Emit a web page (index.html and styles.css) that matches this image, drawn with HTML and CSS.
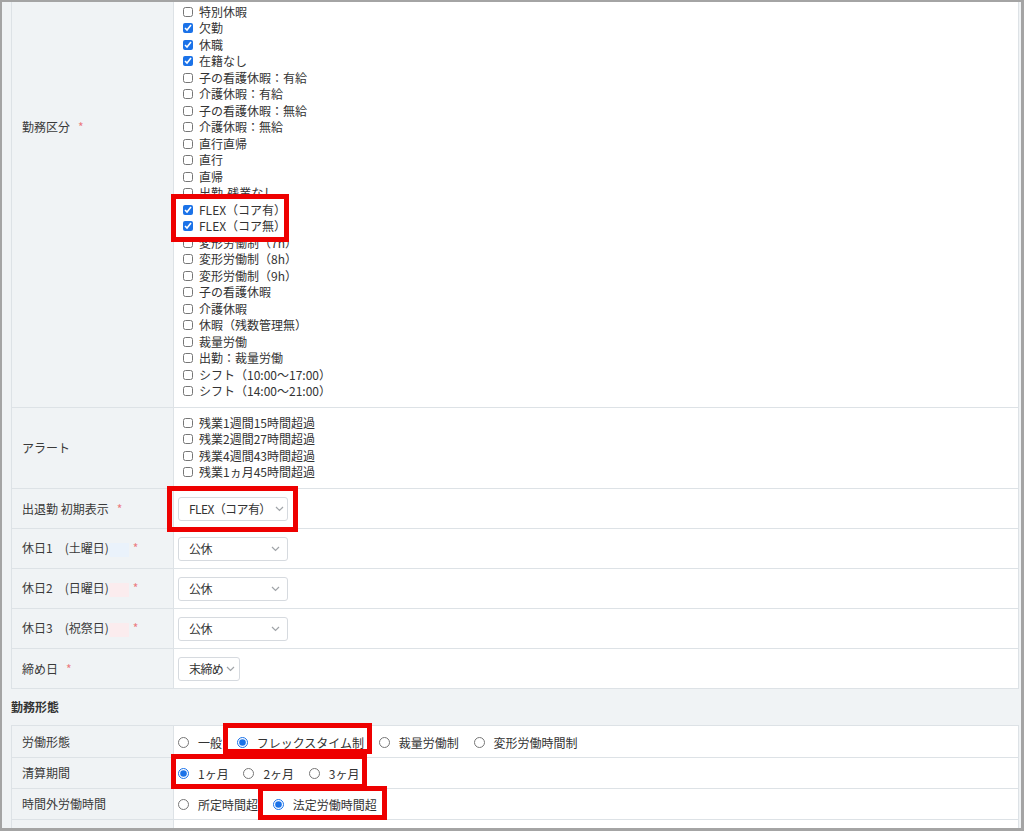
FILE: index.html
```html
<!DOCTYPE html>
<html lang="ja">
<head>
  <meta charset="UTF-8" />
  <title>勤務設定</title>
  <meta name="viewport" content="width=device-width, initial-scale=1" />
  <link rel="stylesheet" href="styles.css">
</head>
<body>
<div class="screen">
  <div class="page">
    <table class="form-table">
      <tr>
        <th>勤務区分<span class="req">*</span></th>
        <td class="list-cell">
          <label class="check"><input type="checkbox" checked>出勤</label>
          <label class="check"><input type="checkbox" checked>有給休暇</label>
          <label class="check"><input type="checkbox">午前半休</label>
          <label class="check"><input type="checkbox">午後半休</label>
          <label class="check"><input type="checkbox">時間有給</label>
          <label class="check"><input type="checkbox">振替休日</label>
          <label class="check"><input type="checkbox">代休</label>
          <label class="check"><input type="checkbox">慶弔休暇</label>
          <label class="check"><input type="checkbox">夏季休暇</label>
          <label class="check"><input type="checkbox">特別休暇</label>
          <label class="check"><input type="checkbox" checked>欠勤</label>
          <label class="check"><input type="checkbox" checked>休職</label>
          <label class="check"><input type="checkbox" checked>在籍なし</label>
          <label class="check"><input type="checkbox">子の看護休暇：有給</label>
          <label class="check"><input type="checkbox">介護休暇：有給</label>
          <label class="check"><input type="checkbox">子の看護休暇：無給</label>
          <label class="check"><input type="checkbox">介護休暇：無給</label>
          <label class="check"><input type="checkbox">直行直帰</label>
          <label class="check"><input type="checkbox">直行</label>
          <label class="check"><input type="checkbox">直帰</label>
          <label class="check"><input type="checkbox">出勤-残業なし</label>
          <label class="check"><input type="checkbox" checked>FLEX（コア有）</label>
          <label class="check"><input type="checkbox" checked>FLEX（コア無）</label>
          <label class="check"><input type="checkbox">変形労働制（7h）</label>
          <label class="check"><input type="checkbox">変形労働制（8h）</label>
          <label class="check"><input type="checkbox">変形労働制（9h）</label>
          <label class="check"><input type="checkbox">子の看護休暇</label>
          <label class="check"><input type="checkbox">介護休暇</label>
          <label class="check"><input type="checkbox">休暇（残数管理無）</label>
          <label class="check"><input type="checkbox">裁量労働</label>
          <label class="check"><input type="checkbox">出勤：裁量労働</label>
          <label class="check"><input type="checkbox">シフト（10:00〜17:00）</label>
          <label class="check"><input type="checkbox">シフト（14:00〜21:00）</label>
        </td>
      </tr>
      <tr>
        <th>アラート</th>
        <td class="list-cell alert">
          <label class="check"><input type="checkbox">残業1週間15時間超過</label>
          <label class="check"><input type="checkbox">残業2週間27時間超過</label>
          <label class="check"><input type="checkbox">残業4週間43時間超過</label>
          <label class="check"><input type="checkbox">残業1ヵ月45時間超過</label>
        </td>
      </tr>
      <tr class="select-row">
        <th>出退勤 初期表示<span class="req">*</span></th>
        <td>
          <div class="select">
            <span>FLEX（コア有）</span>
            <svg width="9" height="6" viewBox="0 0 9 6"><path d="M1 1l3.5 3.5L8 1" fill="none" stroke="#a0a4a8" stroke-width="1.2"/></svg>
          </div>
        </td>
      </tr>
      <tr class="select-row">
        <th>休日1　(土曜日)<span class="blur blue"></span><span class="req">*</span></th>
        <td>
          <div class="select">
            <span>公休</span>
            <svg width="9" height="6" viewBox="0 0 9 6"><path d="M1 1l3.5 3.5L8 1" fill="none" stroke="#a0a4a8" stroke-width="1.2"/></svg>
          </div>
        </td>
      </tr>
      <tr class="select-row">
        <th>休日2　(日曜日)<span class="blur pink"></span><span class="req">*</span></th>
        <td>
          <div class="select">
            <span>公休</span>
            <svg width="9" height="6" viewBox="0 0 9 6"><path d="M1 1l3.5 3.5L8 1" fill="none" stroke="#a0a4a8" stroke-width="1.2"/></svg>
          </div>
        </td>
      </tr>
      <tr class="select-row">
        <th>休日3　(祝祭日)<span class="blur pink"></span><span class="req">*</span></th>
        <td>
          <div class="select">
            <span>公休</span>
            <svg width="9" height="6" viewBox="0 0 9 6"><path d="M1 1l3.5 3.5L8 1" fill="none" stroke="#a0a4a8" stroke-width="1.2"/></svg>
          </div>
        </td>
      </tr>
      <tr class="select-row">
        <th>締め日<span class="req">*</span></th>
        <td>
          <div class="select short">
            <span>末締め</span>
            <svg width="9" height="6" viewBox="0 0 9 6"><path d="M1 1l3.5 3.5L8 1" fill="none" stroke="#a0a4a8" stroke-width="1.2"/></svg>
          </div>
        </td>
      </tr>
    </table>

    <h3 class="section-title">勤務形態</h3>

    <table class="form-table radio-table">
      <tr class="first">
        <th>労働形態</th>
        <td>
          <label class="radio"><input type="radio" name="kind">一般</label>
          <label class="radio"><input type="radio" name="kind" checked>フレックスタイム制</label>
          <label class="radio"><input type="radio" name="kind">裁量労働制</label>
          <label class="radio"><input type="radio" name="kind">変形労働時間制</label>
        </td>
      </tr>
      <tr>
        <th>清算期間</th>
        <td>
          <label class="radio"><input type="radio" name="period" checked>1ヶ月</label>
          <label class="radio"><input type="radio" name="period">2ヶ月</label>
          <label class="radio"><input type="radio" name="period">3ヶ月</label>
        </td>
      </tr>
      <tr>
        <th>時間外労働時間</th>
        <td>
          <label class="radio"><input type="radio" name="over">所定時間超</label>
          <label class="radio"><input type="radio" name="over" checked>法定労働時間超</label>
        </td>
      </tr>
      <tr>
        <th class="cut">週の起算曜日・休日</th>
        <td class="cut">
          <label class="radio"><input type="radio" name="week">法定休日あり</label>
          <label class="radio"><input type="radio" name="week">法定休日なし</label>
        </td>
      </tr>
    </table>
  </div>

  <!-- 注釈の赤枠 -->
  <div class="mark mark-flex"></div>
  <div class="mark mark-default"></div>
  <div class="mark mark-type"></div>
  <div class="mark mark-period"></div>
  <div class="mark mark-over"></div>
</div>
</body>
</html>
```

FILE: styles.css
```css
html, body {
  margin: 0;
  padding: 0;
}
body {
  font-family: "Noto Sans CJK JP", "Noto Sans", sans-serif;
  font-size: 12px;
  color: #333;
}
.screen {
  position: relative;
  width: 1024px;
  height: 831px;
  box-sizing: border-box;
  border-style: solid;
  border-color: #a4a4a4;
  border-width: 2px 3px 3px 2px;
  background: #f0f3f5;
  overflow: hidden;
}
.page {
  padding: 0 2px 0 9px;
  margin-top: -156px;
}
.form-table {
  width: 100%;
  border-collapse: collapse;
  table-layout: fixed;
  background: #fff;
}
.form-table th,
.form-table td {
  border: 1px solid #dde2e6;
}
.form-table th {
  width: 151px;
  padding: 0 0 0 10px;
  background: #f0f3f5;
  text-align: left;
  font-weight: normal;
  color: #3a3a3a;
  white-space: nowrap;
}
.form-table td {
  padding: 0 0 0 9px;
}
.req {
  color: #ec7a7f;
  margin-left: 8px;
}
.blur {
  display: inline-block;
  width: 20px;
  height: 14px;
  vertical-align: middle;
}
.blur.blue { background: #eaf2fb; }
.blur.pink { background: #fbecee; }
.blur + .req { margin-left: 4px; }

.list-cell {
  padding-top: 8px !important;
  padding-bottom: 7px !important;
}
.list-cell.alert {
  padding-top: 7px !important;
}
.check {
  display: flex;
  align-items: center;
  height: 16.5px;
  line-height: 16.5px;
  white-space: nowrap;
}
.check input {
  width: 10px;
  height: 10px;
  margin: 0 6px 0 0;
  accent-color: #1b72e8;
}

.select-row td {
  height: 24px;
  padding: 8px 0 7px 4px;
}
.select {
  display: flex;
  align-items: center;
  justify-content: space-between;
  width: 110px;
  height: 24px;
  box-sizing: border-box;
  padding: 0 7px 0 10px;
  background: #fff;
  border: 1px solid #d6dadf;
  border-radius: 3px;
  color: #333;
  white-space: nowrap;
}
.select span {
  letter-spacing: -0.6px;
}
.select svg {
  flex-shrink: 0;
  margin-left: 4px;
}
.select.short {
  width: 62px;
  padding-right: 4px;
}
.select.short svg {
  margin-left: 2px;
}

.section-title {
  margin: 0;
  padding: 10px 0 10px;
  line-height: 16px;
  font-size: 12px;
  font-weight: bold;
  color: #333;
}
.radio-table td {
  height: 30px;
  padding: 0 0 0 4px;
  white-space: nowrap;
}
.radio-table th {
  height: 30px;
}
.radio-table .first td,
.radio-table .first th {
  height: 31px;
}
.radio-table .cut {
  vertical-align: top;
  padding-top: 7px;
}
.radio {
  display: inline-flex;
  align-items: center;
  margin-right: 12px;
  vertical-align: middle;
}
.radio input {
  width: 11px;
  height: 11px;
  margin: 0 9px 0 0;
  accent-color: #1b72e8;
}

.mark {
  position: absolute;
  border: 5px solid #ee0000;
  box-sizing: border-box;
  pointer-events: none;
}
.mark-flex {
  left: 169px;
  top: 192px;
  width: 118px;
  height: 48px;
}
.mark-default {
  left: 165px;
  top: 484px;
  width: 131px;
  height: 46px;
}
.mark-type {
  left: 221px;
  top: 721px;
  width: 149px;
  height: 31px;
}
.mark-period {
  left: 169px;
  top: 752px;
  width: 196px;
  height: 35px;
}
.mark-over {
  left: 256px;
  top: 784px;
  width: 129px;
  height: 34px;
}
```
